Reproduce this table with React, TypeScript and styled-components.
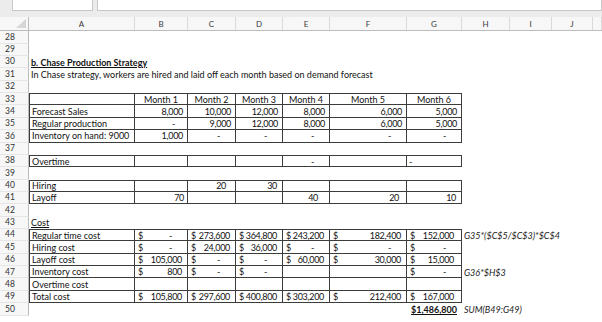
import React from "react"
import styled, { createGlobalStyle } from "styled-components"

const GlobalStyle = createGlobalStyle`
  html, body {
    margin: 0;
    padding: 0;
    background: #fff;
  }
  body {
    font-family: Lato, "Liberation Sans", Arial, sans-serif;
    font-size: 9px;
    color: #111;
  }
`

const TEMPLATE = "29px 106px 53px 48px 47px 47px 77px 55px 48px 42px 41px 1fr"
const LETTERS = ["A", "B", "C", "D", "E", "F", "G", "H", "I", "J", ""]
const LINE = "#3c3c3c"

const Window = styled.div`
  width: 602px;
  height: 322px;
  overflow: hidden;
  background: #fff;
`

const TopBar = styled.div`
  height: 17px;
  background: #ececec;
  display: flex;
  gap: 4px;
  padding-left: 12px;
  box-sizing: border-box;
`

const TopBox = styled.div<{ $w?: number }>`
  height: 11px;
  width: ${({ $w }) => ($w ? `${$w}px` : "auto")};
  flex: ${({ $w }) => ($w ? "none" : "1")};
  background: #fff;
  border: 1px solid #c8c8c8;
  border-top: none;
  box-sizing: border-box;
`

const HeaderRow = styled.div`
  display: grid;
  grid-template-columns: ${TEMPLATE};
  height: 14.3px;
  background: #f7f7f7;
  border-bottom: 1px solid #bcbcbc;
  box-sizing: border-box;
`

const ColHead = styled.div`
  display: flex;
  align-items: center;
  justify-content: center;
  color: #3a3a3a;
  font-size: 8px;
  line-height: 1;
  border-right: 1px solid #dadada;
`

const Corner = styled.div`
  position: relative;
  border-right: 1px solid #bcbcbc;
`

const Triangle = styled.div`
  position: absolute;
  right: 2px;
  bottom: 2px;
  width: 0;
  height: 0;
  border-left: 10px solid transparent;
  border-bottom: 9px solid #d6d6d6;
`

const Row = styled.div`
  display: grid;
  grid-template-columns: ${TEMPLATE};
  height: 12.36px;
`

const RowHead = styled.div`
  display: flex;
  align-items: center;
  padding-left: 5px;
  color: #333;
  font-size: 8.5px;
  line-height: 1;
  background: #f7f7f7;
  border-right: 1px solid #bcbcbc;
  border-bottom: 1px solid #e6e6e6;
  box-sizing: border-box;
`

const Cell = styled.div<{
  $box?: boolean
  $left?: boolean
  $top?: boolean
  $align?: "left" | "right" | "center"
  $pr?: number
}>`
  display: flex;
  align-items: center;
  justify-content: ${({ $align }) =>
    $align === "right" ? "flex-end" : $align === "center" ? "center" : "flex-start"};
  padding: 0 ${({ $pr }) => $pr ?? 2}px 0 2px;
  line-height: 1;
  white-space: nowrap;
  overflow: visible;
  box-sizing: border-box;
  min-width: 0;
  border-right: ${({ $box }) => ($box ? `1px solid ${LINE}` : "none")};
  border-bottom: ${({ $box }) => ($box ? `1px solid ${LINE}` : "none")};
  border-left: ${({ $left }) => ($left ? `1px solid ${LINE}` : "none")};
  border-top: ${({ $top }) => ($top ? `1px solid ${LINE}` : "none")};
`

const Money = styled(Cell)`
  justify-content: space-between;
  padding-left: 3px;
`

const Num = styled.span`
  letter-spacing: -0.3px;
`

const Title = styled.span`
  font-weight: bold;
  text-decoration: underline;
`

const Under = styled.span`
  text-decoration: underline;
`

const Formula = styled.span`
  font-style: italic;
  color: #222;
`

const Total = styled.span`
  font-weight: bold;
  text-decoration: underline;
`

type Kind = "text" | "num" | "dash" | "head" | "left" | "acct" | "title" | "under" | "formula" | "total"

type Spec = { t: string; k: Kind; pr?: number } | null

type RowSpec = { n: number; box?: boolean; top?: boolean; cells: Spec[] }

const tx = (t: string): Spec => ({ t, k: "text" })
const nm = (t: string, pr = 4): Spec => ({ t, k: "num", pr })
const ds: Spec = { t: "-", k: "dash", pr: 15 }
const ac = (t: string, pr = 5): Spec => ({ t, k: "acct", pr: t === "-" ? 15 : pr })

const rows: RowSpec[] = [
  { n: 28, cells: [] },
  { n: 29, cells: [] },
  { n: 30, cells: [{ t: "b. Chase Production Strategy", k: "title" }] },
  {
    n: 31,
    cells: [tx("In Chase strategy, workers are hired and laid off each month based on demand forecast")],
  },
  { n: 32, cells: [] },
  {
    n: 33,
    box: true,
    top: true,
    cells: [null, ...[1, 2, 3, 4, 5, 6].map((m): Spec => ({ t: `Month ${m}`, k: "head" }))],
  },
  {
    n: 34,
    box: true,
    cells: [tx("Forecast Sales"), nm("8,000"), nm("10,000"), nm("12,000"), nm("8,000"), nm("6,000"), nm("5,000")],
  },
  {
    n: 35,
    box: true,
    cells: [tx("Regular production"), { t: "-", k: "dash", pr: 12 }, nm("9,000"), nm("12,000"), nm("8,000"), nm("6,000"), nm("5,000")],
  },
  {
    n: 36,
    box: true,
    cells: [tx("Inventory on hand: 9000"), nm("1,000"), ds, ds, ds, ds, ds],
  },
  { n: 37, cells: [] },
  {
    n: 38,
    box: true,
    top: true,
    cells: [tx("Overtime"), null, null, null, ds, null, { t: "-", k: "left" }],
  },
  { n: 39, cells: [] },
  {
    n: 40,
    box: true,
    top: true,
    cells: [tx("Hiring"), null, nm("20", 9), nm("30", 5), null, null, null],
  },
  {
    n: 41,
    box: true,
    cells: [tx("Layoff"), nm("70", 3), null, null, nm("40", 11), nm("20", 7), nm("10", 5)],
  },
  { n: 42, cells: [] },
  { n: 43, cells: [{ t: "Cost", k: "under" }] },
  {
    n: 44,
    box: true,
    top: true,
    cells: [
      tx("Regular time cost"),
      ac("-"),
      ac("273,600"),
      ac("364,800"),
      ac("243,200"),
      ac("182,400"),
      ac("152,000", 7),
      { t: "G35*($C$5/$C$3)*$C$4", k: "formula" },
    ],
  },
  {
    n: 45,
    box: true,
    cells: [tx("Hiring cost"), ac("-"), ac("24,000"), ac("36,000"), ac("-"), ac("-"), ac("-")],
  },
  {
    n: 46,
    box: true,
    cells: [tx("Layoff cost"), ac("105,000"), ac("-"), ac("-"), ac("60,000"), ac("30,000"), ac("15,000", 7)],
  },
  {
    n: 47,
    box: true,
    cells: [tx("Inventory cost"), ac("800"), ac("-"), ac("-"), null, null, ac("-"), { t: "G36*$H$3", k: "formula" }],
  },
  { n: 48, box: true, cells: [tx("Overtime cost"), null, null, null, null, null, null] },
  {
    n: 49,
    box: true,
    cells: [
      tx("Total cost"),
      ac("105,800"),
      ac("297,600"),
      ac("400,800"),
      ac("303,200"),
      ac("212,400"),
      ac("167,000", 7),
    ],
  },
  {
    n: 50,
    cells: [null, null, null, null, null, null, { t: "$1,486,800", k: "total" }, { t: "SUM(B49:G49)", k: "formula" }],
  },
]

function renderCell(row: RowSpec, spec: Spec, i: number) {
  const box = !!row.box && i < 7
  const props = { $box: box, $left: box && i === 0, $top: box && !!row.top }
  if (!spec) return <Cell key={i} {...props} />
  switch (spec.k) {
    case "title":
      return (
        <Cell key={i} {...props}>
          <Title>{spec.t}</Title>
        </Cell>
      )
    case "under":
      return (
        <Cell key={i} {...props}>
          <Under>{spec.t}</Under>
        </Cell>
      )
    case "formula":
      return (
        <Cell key={i} {...props}>
          <Formula>{spec.t}</Formula>
        </Cell>
      )
    case "total":
      return (
        <Cell key={i} {...props} $align="right" $pr={5}>
          <Total>{spec.t}</Total>
        </Cell>
      )
    case "head":
      return (
        <Cell key={i} {...props} $align="center">
          {spec.t}
        </Cell>
      )
    case "num":
    case "dash":
      return (
        <Cell key={i} {...props} $align="right" $pr={spec.pr}>
          <Num>{spec.t}</Num>
        </Cell>
      )
    case "acct":
      return (
        <Money key={i} {...props} $pr={spec.pr}>
          <span>$</span>
          <Num>{spec.t}</Num>
        </Money>
      )
    default:
      return (
        <Cell key={i} {...props}>
          {spec.t}
        </Cell>
      )
  }
}

export default function App() {
  return (
    <Window>
      <GlobalStyle />
      <TopBar>
        <TopBox $w={81} />
        <TopBox />
      </TopBar>
      <HeaderRow>
        <Corner>
          <Triangle />
        </Corner>
        {LETTERS.map((l, i) => (
          <ColHead key={i}>{l}</ColHead>
        ))}
      </HeaderRow>
      {rows.map((row) => {
        const cells: Spec[] = Array.from({ length: 11 }, (_, i) => row.cells[i] ?? null)
        return (
          <Row key={row.n}>
            <RowHead>{row.n}</RowHead>
            {cells.map((c, i) => renderCell(row, c, i))}
          </Row>
        )
      })}
    </Window>
  )
}
